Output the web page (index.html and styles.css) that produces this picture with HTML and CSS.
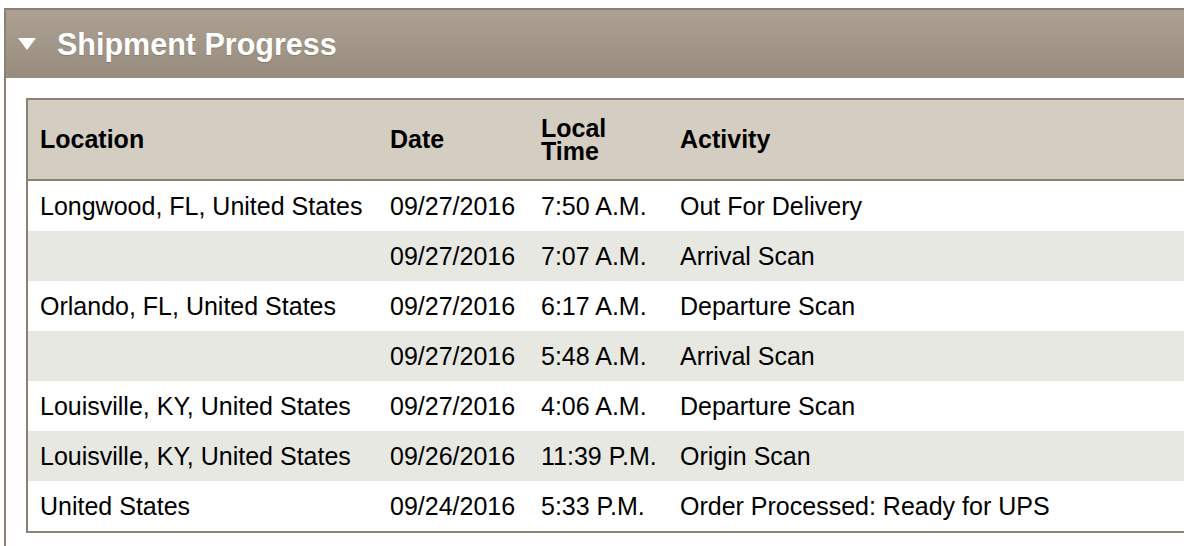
FILE: index.html
```html
<!DOCTYPE html>
<html>
<head>
<meta charset="utf-8">
<link rel="stylesheet" href="styles.css">
</head>
<body>
<div class="panel">
  <div class="panel-head">
    <svg class="caret" width="18" height="13" viewBox="0 0 18 13"><polygon points="0,0 18,0 9,12" fill="#fff"/></svg>
    <h2 class="panel-title">Shipment Progress</h2>
  </div>
  <div class="panel-body">
    <div class="table-wrap">
      <table class="progress">
        <colgroup>
          <col class="c-loc"><col class="c-date"><col class="c-time"><col class="c-act">
        </colgroup>
        <thead>
          <tr><th>Location</th><th>Date</th><th class="th-time">Local Time</th><th>Activity</th></tr>
        </thead>
        <tbody>
          <tr><td>Longwood, FL, United States</td><td>09/27/2016</td><td>7:50 A.M.</td><td>Out For Delivery</td></tr>
          <tr class="alt"><td></td><td>09/27/2016</td><td>7:07 A.M.</td><td>Arrival Scan</td></tr>
          <tr><td>Orlando, FL, United States</td><td>09/27/2016</td><td>6:17 A.M.</td><td>Departure Scan</td></tr>
          <tr class="alt"><td></td><td>09/27/2016</td><td>5:48 A.M.</td><td>Arrival Scan</td></tr>
          <tr><td>Louisville, KY, United States</td><td>09/27/2016</td><td>4:06 A.M.</td><td>Departure Scan</td></tr>
          <tr class="alt"><td>Louisville, KY, United States</td><td>09/26/2016</td><td>11:39 P.M.</td><td>Origin Scan</td></tr>
          <tr><td>United States</td><td>09/24/2016</td><td>5:33 P.M.</td><td>Order Processed: Ready for UPS</td></tr>
        </tbody>
      </table>
    </div>
  </div>
</div>
</body>
</html>
```

FILE: styles.css
```css
html, body {
  margin: 0;
  padding: 0;
  overflow: hidden;
  background: #fff;
}
body {
  font-family: "Liberation Sans", Arial, Helvetica, sans-serif;
  color: #000;
}
.panel {
  margin: 8px 0 0 4px;
  width: 1240px;
  border-left: 2px solid #8b8274;
  border-top: 2px solid #8b8274;
}
.panel-head {
  height: 68px;
  display: flex;
  align-items: center;
  padding-left: 12px;
  background: linear-gradient(to bottom, #aca193, #978c7e);
}
.caret {
  display: block;
  margin-top: 1px;
}
.panel-title {
  margin: 0 0 0 21px;
  font-size: 30.5px;
  font-weight: bold;
  color: #fff;
  text-shadow: 0 1px 1px rgba(80, 70, 60, 0.3);
}
.panel-body {
  padding: 20px 0 20px 20px;
}
.table-wrap {
  border: 2px solid #8b8274;
}
.progress {
  width: 100%;
  table-layout: fixed;
  border-collapse: collapse;
  font-size: 25px;
}
.c-loc { width: 350px; }
.c-date { width: 151px; }
.c-time { width: 139px; }
.progress th {
  background: #d4cdc2;
  height: 80px;
  padding: 0 12px;
  text-align: left;
  font-weight: bold;
  line-height: 23px;
  border-bottom: 2px solid #8b8274;
  box-sizing: border-box;
}
.progress td {
  height: 50px;
  padding: 0 12px;
  white-space: nowrap;
  line-height: 50px;
}
.progress tr.alt td {
  background: #e8e8e3;
}
```
